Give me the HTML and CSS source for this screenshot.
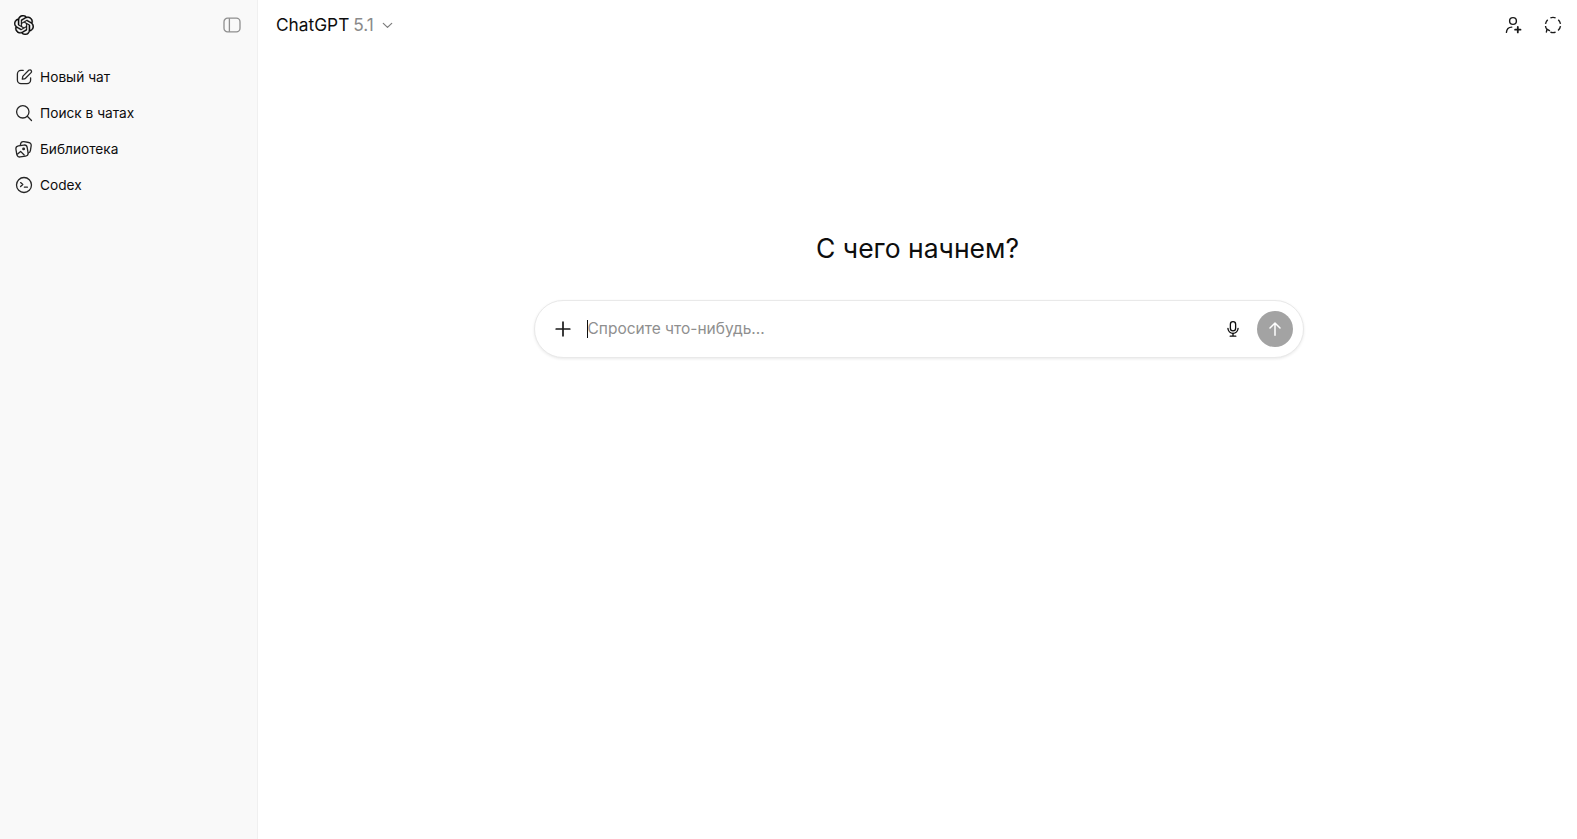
FILE: index.html
```html
<!DOCTYPE html>
<html lang="ru">
<head>
<meta charset="utf-8">
<title>ChatGPT</title>
<link rel="stylesheet" href="styles.css">
</head>
<body>
<div class="app">
  <aside class="sidebar">
    <div class="side-head">
      <svg class="logo" viewBox="0 0 24 24"><path fill="#0d0d0d" stroke="#0d0d0d" stroke-width="0.3" d="M22.2819 9.8211a5.9847 5.9847 0 0 0-.5157-4.9108 6.0462 6.0462 0 0 0-6.5098-2.9A6.0651 6.0651 0 0 0 4.9807 4.1818a5.9847 5.9847 0 0 0-3.9977 2.9 6.0462 6.0462 0 0 0 .7427 7.0966 5.98 5.98 0 0 0 .511 4.9107 6.051 6.051 0 0 0 6.5146 2.9001A5.9847 5.9847 0 0 0 13.2599 24a6.0557 6.0557 0 0 0 5.7718-4.2058 5.9894 5.9894 0 0 0 3.9977-2.9001 6.0557 6.0557 0 0 0-.7475-7.073zm-9.022 12.6081a4.4755 4.4755 0 0 1-2.8764-1.0408l.1419-.0804 4.7783-2.7582a.7948.7948 0 0 0 .3927-.6813v-6.7369l2.02 1.1686a.071.071 0 0 1 .038.052v5.5826a4.504 4.504 0 0 1-4.4945 4.4944zm-9.6607-4.1254a4.4708 4.4708 0 0 1-.5346-3.0137l.142.0852 4.783 2.7582a.7712.7712 0 0 0 .7806 0l5.8428-3.3685v2.3324a.0804.0804 0 0 1-.0332.0615L9.74 19.9502a4.4992 4.4992 0 0 1-6.1408-1.6464zM2.3408 7.8956a4.485 4.485 0 0 1 2.3655-1.9728V11.6a.7664.7664 0 0 0 .3879.6765l5.8144 3.3543-2.0201 1.1685a.0757.0757 0 0 1-.071 0l-4.8303-2.7865A4.504 4.504 0 0 1 2.3408 7.872zm16.5963 3.8558L13.1038 8.364 15.1192 7.2a.0757.0757 0 0 1 .071 0l4.8303 2.7913a4.4944 4.4944 0 0 1-.6765 8.1042v-5.6772a.79.79 0 0 0-.407-.667zm2.0107-3.0231l-.142-.0852-4.7735-2.7818a.7759.7759 0 0 0-.7854 0L9.409 9.2297V6.8974a.0662.0662 0 0 1 .0284-.0615l4.8303-2.7866a4.4992 4.4992 0 0 1 6.6802 4.66zM8.3065 12.863l-2.02-1.1638a.0804.0804 0 0 1-.038-.0567V6.0742a4.4992 4.4992 0 0 1 7.3757-3.4537l-.142.0805L8.704 5.459a.7948.7948 0 0 0-.3927.6813zm1.0976-2.3654l2.602-1.4998 2.6069 1.4998v2.9994l-2.5974 1.4997-2.6067-1.4997Z"/></svg>
      <svg class="panel-icon" viewBox="0 0 18 16" fill="none" stroke="#8f8f8f" stroke-width="1.3"><rect x="1" y="1.2" width="16" height="13.6" rx="3.6"/><path d="M6.4 1.2v13.6"/></svg>
    </div>
    <nav class="nav">
      <a class="nav-item">
        <svg class="nav-icon" viewBox="0 0 18 18"><path d="M8.2 2.4H6A3.6 3.6 0 0 0 2.4 6v6A3.6 3.6 0 0 0 6 15.6h6a3.6 3.6 0 0 0 3.6-3.6V9.8"/><path d="M14.7 1.9a1.6 1.6 0 0 1 1.4 2.7l-5.6 5.7a2 2 0 0 1-1 .5l-2.2.4.4-2.3a2 2 0 0 1 .5-1l5.5-5.6a1.6 1.6 0 0 1 1-.4z"/></svg>
        <span>Новый чат</span>
      </a>
      <a class="nav-item">
        <svg class="nav-icon" viewBox="0 0 18 18"><circle cx="7.8" cy="7.8" r="6.2"/><path d="M12.3 12.3l4.2 4.2"/></svg>
        <span>Поиск в чатах</span>
      </a>
      <a class="nav-item">
        <svg class="nav-icon" viewBox="0 0 18 18"><rect x="1.3" y="5.4" width="11.4" height="11.2" rx="3" transform="rotate(-9 7 11)"/><path d="M5.4 5l.2-1a2.8 2.8 0 0 1 3.2-2.3l5 .8a2.8 2.8 0 0 1 2.4 3.2l-.8 5a2.8 2.8 0 0 1-2 2.3"/><path d="M2.6 14l3-2.6 3.6 3.6"/><circle cx="8.6" cy="8.9" r=".8"/></svg>
        <span>Библиотека</span>
      </a>
      <a class="nav-item">
        <svg class="nav-icon" viewBox="0 0 18 18"><circle cx="9" cy="9" r="7.5"/><path d="M5.6 6.6L7.8 8.6 5.6 10.6"/><path d="M9.4 11.2h3"/></svg>
        <span>Codex</span>
      </a>
    </nav>
  </aside>
  <main class="main">
    <header class="topbar">
      <div class="model">
        <span class="model-name">ChatGPT</span>
        <span class="model-version">5.1</span>
        <svg class="chevron" viewBox="0 0 12 8"><path d="M1.2 1.6L6 6.2l4.8-4.6"/></svg>
      </div>
      <div class="top-actions">
        <svg class="top-icon" viewBox="0 0 20 20"><circle cx="10" cy="6" r="3.4"/><path d="M3.4 17.4c.3-3.6 2.5-5.2 5.4-5.3"/><path d="M14.8 12v5.4M12.1 14.7h5.4" stroke-width="1.8"/></svg>
        <svg class="top-icon" viewBox="0 0 20 20"><path stroke-linecap="butt" d="M7.4 2.8a7.6 7.6 0 0 1 5.2 0M15.3 4.7a7.6 7.6 0 0 1 2.2 4.2M17.5 11.2a7.6 7.6 0 0 1-2.4 4.3M12.6 17.2a7.6 7.6 0 0 1-5.2 0M3.6 14a7.6 7.6 0 0 1-1.1-3M2.5 8.9a7.6 7.6 0 0 1 2.2-4.2"/><path d="M3.4 17l.5-2.8 2.6 1.4" stroke-width="1.4"/></svg>
      </div>
    </header>
    <section class="center">
      <h1 class="title">С чего начнем?</h1>
      <div class="composer">
        <svg class="plus" viewBox="0 0 16 16"><path d="M8 1.2v13.6M1.2 8h13.6"/></svg>
        <div class="prompt"><span class="caret"></span><span class="placeholder">Спросите что-нибудь...</span></div>
        <svg class="mic" viewBox="0 0 16 20"><rect x="5" y="1.5" width="6" height="10.6" rx="3"/><path d="M2.2 9.2a5.8 5.8 0 0 0 11.6 0"/><path d="M8 15v3M4.8 18.2h6.4"/></svg>
        <div class="send"><svg viewBox="0 0 16 16"><path d="M8 14.2V2.2M3 7l5-5 5 5"/></svg></div>
      </div>
    </section>
  </main>
</div>
</body>
</html>
```
FILE: styles.css
```css
* { box-sizing: border-box; }
html, body { margin: 0; height: 100%; }
body {
  font-family: Inter, "Liberation Sans", sans-serif;
  color: #0d0d0d;
  background: #fff;
  overflow: hidden;
}
.app { display: flex; height: 839px; }
.sidebar {
  width: 258px;
  flex: none;
  background: #f9f9f9;
  border-right: 1px solid #f0f0f0;
}
.side-head {
  height: 50px;
  display: flex;
  align-items: center;
  justify-content: space-between;
  padding: 0 16px 0 14px;
}
.logo { width: 20px; height: 20px; }
.panel-icon { width: 18px; height: 16px; }
.nav { margin-top: 9px; display: flex; flex-direction: column; }
.nav-item {
  height: 36px;
  display: flex;
  align-items: center;
  gap: 7px;
  padding-left: 15px;
  font-size: 13.7px;
  line-height: 20px;
  color: #0d0d0d;
}
.nav-icon {
  width: 18px;
  height: 18px;
  fill: none;
  stroke: #262626;
  stroke-width: 1.3;
  stroke-linecap: round;
  stroke-linejoin: round;
  flex: none;
}
.main { flex: 1; min-width: 0; display: flex; flex-direction: column; }
.topbar {
  height: 50px;
  display: flex;
  align-items: center;
  justify-content: space-between;
  padding: 0 14px 0 18px;
}
.model { display: flex; align-items: center; font-size: 17.3px; line-height: 24px; }
.model-version { color: #8a8a8a; margin-left: 4px; }
.chevron {
  width: 11px;
  height: 7px;
  margin-left: 8px;
  fill: none;
  stroke: #7d7d7d;
  stroke-width: 1.4;
  stroke-linecap: round;
  stroke-linejoin: round;
}
.top-actions { display: flex; align-items: center; gap: 20px; }
.top-icon {
  width: 20px;
  height: 20px;
  fill: none;
  stroke: #1a1a1a;
  stroke-width: 1.4;
  stroke-linecap: round;
  stroke-linejoin: round;
}
.center { display: flex; flex-direction: column; align-items: center; padding-top: 181px; }
.title {
  margin: 0;
  font-size: 26.5px;
  line-height: 34px;
  font-weight: 400;
  color: #0d0d0d;
}
.composer {
  width: 770px;
  height: 58px;
  margin-top: 35px;
  margin-left: 2px;
  display: flex;
  align-items: center;
  padding: 0 10px 0 20px;
  background: #fff;
  border: 1px solid #e9e9e9;
  border-radius: 29px;
  box-shadow: 0 1px 3px rgba(0, 0, 0, 0.09);
}
.plus {
  width: 16px;
  height: 16px;
  flex: none;
  fill: none;
  stroke: #1a1a1a;
  stroke-width: 1.7;
  stroke-linecap: round;
}
.prompt { flex: 1; display: flex; align-items: center; margin-left: 16px; }
.caret { width: 1px; height: 18px; background: #0d0d0d; }
.placeholder { font-size: 15.5px; line-height: 24px; color: #8f8f8f; margin-left: 0; }
.mic {
  width: 14px;
  height: 18px;
  flex: none;
  margin-right: 17px;
  fill: none;
  stroke: #0d0d0d;
  stroke-width: 1.5;
  stroke-linecap: round;
}
.send {
  width: 36px;
  height: 36px;
  flex: none;
  border-radius: 50%;
  background: #a3a3a3;
  display: flex;
  align-items: center;
  justify-content: center;
}
.send svg {
  width: 16px;
  height: 16px;
  fill: none;
  stroke: #fff;
  stroke-width: 1.5;
  stroke-linecap: round;
  stroke-linejoin: round;
}
```
